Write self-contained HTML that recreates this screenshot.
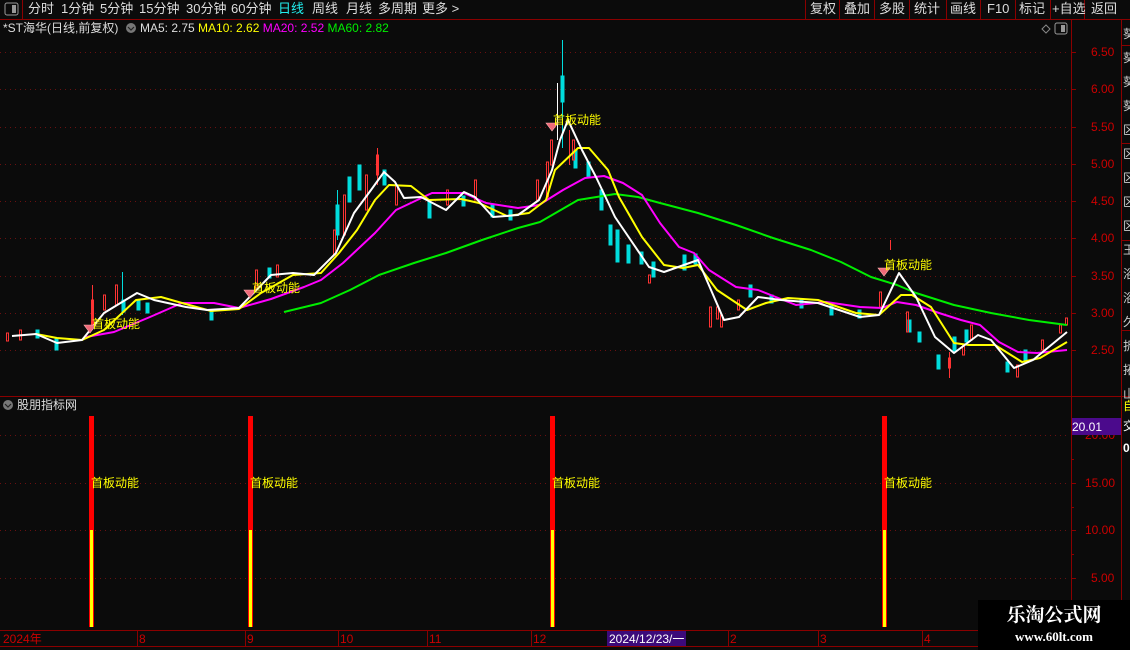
<!DOCTYPE html>
<html><head><meta charset="utf-8"><style>
*{margin:0;padding:0}
body{width:1130px;height:650px;background:#0b0b0b;overflow:hidden;position:relative;font-family:"Liberation Sans","Noto Sans CJK SC",sans-serif;color:#ddd}
.t{position:absolute;white-space:nowrap;font-size:12px;line-height:14px}
.m{font-size:13px}
</style></head><body>
<svg width="1130" height="650" style="position:absolute;left:0;top:0" xmlns="http://www.w3.org/2000/svg">
<rect x="0" y="0" width="1130" height="19" fill="#0b0b0b"/>
<line x1="0" y1="19.5" x2="1130" y2="19.5" stroke="#8b0000"/>
<line x1="22.5" y1="0" x2="22.5" y2="19" stroke="#8b0000"/>
<rect x="5" y="3" width="13" height="12" rx="2" fill="none" stroke="#999"/><rect x="12" y="5" width="4" height="8" fill="#999"/>
<g stroke="#8b0000"><line x1="805.5" y1="0" x2="805.5" y2="19"/><line x1="839.5" y1="0" x2="839.5" y2="19"/><line x1="874.5" y1="0" x2="874.5" y2="19"/><line x1="909.5" y1="0" x2="909.5" y2="19"/><line x1="946.5" y1="0" x2="946.5" y2="19"/><line x1="980.5" y1="0" x2="980.5" y2="19"/><line x1="1015.5" y1="0" x2="1015.5" y2="19"/><line x1="1050.5" y1="0" x2="1050.5" y2="19"/><line x1="1084.5" y1="0" x2="1084.5" y2="19"/></g>
<line x1="1071.5" y1="20" x2="1071.5" y2="630" stroke="#8b0000"/>
<line x1="1121.5" y1="20" x2="1121.5" y2="650" stroke="#8b0000"/>
<line x1="0" y1="396.5" x2="1130" y2="396.5" stroke="#8b0000"/>
<line x1="0" y1="630.5" x2="978" y2="630.5" stroke="#8b0000"/>
<line x1="0" y1="646.5" x2="978" y2="646.5" stroke="#8b0000"/>
<g stroke="#6a1010" stroke-dasharray="1 4">
<line x1="0" y1="52.5" x2="1068" y2="52.5"/><line x1="0" y1="89.5" x2="1068" y2="89.5"/><line x1="0" y1="127.5" x2="1068" y2="127.5"/><line x1="0" y1="164.5" x2="1068" y2="164.5"/><line x1="0" y1="201.5" x2="1068" y2="201.5"/><line x1="0" y1="238.5" x2="1068" y2="238.5"/><line x1="0" y1="276.5" x2="1068" y2="276.5"/><line x1="0" y1="313.5" x2="1068" y2="313.5"/><line x1="0" y1="350.5" x2="1068" y2="350.5"/>
<line x1="0" y1="435.5" x2="1068" y2="435.5"/><line x1="0" y1="483.5" x2="1068" y2="483.5"/><line x1="0" y1="530.5" x2="1068" y2="530.5"/><line x1="0" y1="578.5" x2="1068" y2="578.5"/>
</g>
<g stroke="#8b0000">
<line x1="1071" y1="52.5" x2="1076" y2="52.5"/><line x1="1071" y1="89.5" x2="1076" y2="89.5"/><line x1="1071" y1="127.5" x2="1076" y2="127.5"/><line x1="1071" y1="164.5" x2="1076" y2="164.5"/><line x1="1071" y1="201.5" x2="1076" y2="201.5"/><line x1="1071" y1="238.5" x2="1076" y2="238.5"/><line x1="1071" y1="276.5" x2="1076" y2="276.5"/><line x1="1071" y1="313.5" x2="1076" y2="313.5"/><line x1="1071" y1="350.5" x2="1076" y2="350.5"/>
<line x1="1071" y1="459.5" x2="1074" y2="459.5"/><line x1="1071" y1="483.5" x2="1076" y2="483.5"/><line x1="1071" y1="507.5" x2="1074" y2="507.5"/><line x1="1071" y1="530.5" x2="1076" y2="530.5"/><line x1="1071" y1="554.5" x2="1074" y2="554.5"/><line x1="1071" y1="578.5" x2="1076" y2="578.5"/>
<line x1="1121" y1="45.5" x2="1130" y2="45.5"/><line x1="1121" y1="143.5" x2="1130" y2="143.5"/><line x1="1121" y1="240.5" x2="1130" y2="240.5"/><line x1="1121" y1="330.5" x2="1130" y2="330.5"/>
<line x1="137.5" y1="630" x2="137.5" y2="646"/><line x1="245.5" y1="630" x2="245.5" y2="646"/><line x1="338.5" y1="630" x2="338.5" y2="646"/><line x1="427.5" y1="630" x2="427.5" y2="646"/><line x1="531.5" y1="630" x2="531.5" y2="646"/><line x1="728.5" y1="630" x2="728.5" y2="646"/><line x1="818.5" y1="630" x2="818.5" y2="646"/><line x1="922.5" y1="630" x2="922.5" y2="646"/>
</g>
<rect x="607" y="631" width="79" height="15" fill="#3c0a7a"/>
<g stroke-width="1">
<g fill="#0dd" stroke="#0dd">
<line x1="562.5" y1="40" x2="562.5" y2="148"/><rect x="561" y="76" width="3" height="26"/>
<rect x="36" y="330" width="3" height="8"/><rect x="55" y="338" width="3" height="12"/><rect x="137" y="300" width="3" height="10"/><rect x="122" y="300" width="3" height="12"/><line x1="122.5" y1="272" x2="122.5" y2="315"/><rect x="146" y="303" width="3" height="10"/><rect x="210" y="310" width="3" height="10"/>
<rect x="268" y="268" width="3" height="10"/><rect x="336" y="205" width="3" height="30"/><line x1="337.5" y1="190" x2="337.5" y2="240"/><rect x="348" y="177" width="3" height="25"/><rect x="358" y="165" width="3" height="25"/><rect x="383" y="170" width="3" height="15"/><rect x="428" y="200" width="3" height="18"/><rect x="462" y="196" width="3" height="10"/><rect x="491" y="205" width="3" height="12"/><rect x="509" y="210" width="3" height="10"/>
<rect x="574" y="150" width="3" height="18"/><rect x="587" y="162" width="3" height="16"/><rect x="600" y="190" width="3" height="20"/><rect x="609" y="225" width="3" height="20"/><rect x="616" y="230" width="3" height="32"/><rect x="627" y="245" width="3" height="18"/><rect x="640" y="252" width="3" height="12"/><rect x="652" y="262" width="3" height="15"/><rect x="683" y="255" width="3" height="15"/><rect x="694" y="254" width="3" height="10"/><rect x="749" y="285" width="3" height="12"/><rect x="770" y="295" width="3" height="8"/><rect x="800" y="300" width="3" height="8"/><rect x="830" y="305" width="3" height="10"/><rect x="858" y="310" width="3" height="8"/><rect x="908" y="320" width="3" height="12"/><rect x="918" y="332" width="3" height="10"/><rect x="937" y="355" width="3" height="14"/><rect x="953" y="337" width="3" height="14"/><rect x="965" y="330" width="3" height="12"/><rect x="1006" y="362" width="3" height="10"/><rect x="1024" y="350" width="3" height="10"/>
</g>
<g fill="none" stroke="#f33">
<rect x="6.5" y="333" width="2" height="8"/><rect x="19.5" y="330" width="2" height="10"/><rect x="91.5" y="300" width="2" height="25"/><line x1="92.5" y1="285" x2="92.5" y2="330"/><rect x="103.5" y="295" width="2" height="15"/><rect x="115.5" y="285" width="2" height="20"/><rect x="255.5" y="270" width="2" height="20"/><rect x="276.5" y="265" width="2" height="12"/><rect x="333.5" y="230" width="2" height="25"/><rect x="343.5" y="195" width="2" height="40"/><rect x="365.5" y="175" width="2" height="35"/><line x1="377.5" y1="148" x2="377.5" y2="185"/><rect x="376.5" y="155" width="2" height="20"/><rect x="395.5" y="185" width="2" height="20"/><rect x="446.5" y="190" width="2" height="15"/><rect x="474.5" y="180" width="2" height="20"/><rect x="536.5" y="180" width="2" height="20"/><rect x="546.5" y="162" width="2" height="35"/><rect x="550.5" y="140" width="2" height="25"/>
<line x1="557.5" y1="83" x2="557.5" y2="140" stroke="#fff"/><line x1="569.5" y1="130" x2="569.5" y2="165"/><rect x="572.5" y="140" width="2" height="20"/>
<rect x="648.5" y="275" width="2" height="8"/><rect x="709.5" y="307" width="2" height="20"/><rect x="716.5" y="307" width="2" height="12"/><rect x="720.5" y="315" width="2" height="12"/><rect x="737.5" y="300" width="2" height="10"/><line x1="890.5" y1="240" x2="890.5" y2="250"/><rect x="879.5" y="292" width="2" height="15"/><rect x="906.5" y="312" width="2" height="20"/><rect x="948.5" y="358" width="2" height="10"/><line x1="949.5" y1="352" x2="949.5" y2="378"/><rect x="962.5" y="345" width="2" height="10"/><rect x="970.5" y="325" width="2" height="15"/><rect x="1016.5" y="365" width="2" height="12"/><rect x="1041.5" y="340" width="2" height="10"/><rect x="1059.5" y="325" width="2" height="8"/><rect x="1065.5" y="318" width="2" height="7"/>
</g>
</g>
<g fill="none" stroke-width="2" stroke-linejoin="round">
<polyline stroke="#0e0" points="284,312 321,303 350,290 379,275 414,263 446,253 482,240 518,228 540,222 578,200 615,194 638,197 660,203 698,213 736,225 773,238 811,250 841,262 871,277 897,285 916,293 954,305 991,313 1029,320 1067,325"/>
<polyline stroke="#f0f" points="86,337 114,332 150,317 182,303 214,303 239,308 271,299 304,287 321,280 343,263 375,233 396,210 432,193 464,193 486,203 518,208 539,205 563,190 585,178 604,176 623,183 642,195 660,223 679,247 694,253 709,270 736,287 758,290 796,305 826,302 860,307 882,308 897,302 916,305 939,313 961,320 980,325 999,342 1018,352 1037,353 1067,350"/>
<polyline stroke="#ff0" points="36,334 57,338 82,340 104,330 136,300 161,297 182,303 211,311 239,309 261,293 293,275 321,273 339,253 357,230 375,200 389,185 411,186 429,200 461,199 479,203 507,216 529,213 546,200 555,170 578,148 589,148 608,170 619,197 642,237 664,265 683,268 698,265 717,290 747,310 766,303 788,298 818,300 856,313 879,315 901,295 912,295 931,307 954,343 969,345 995,345 1022,362 1040,358 1067,342"/>
<polyline stroke="#fff" points="12,336 36,334 57,343 82,340 104,313 137,293 154,300 186,307 207,310 239,308 271,275 293,273 314,275 336,253 354,213 371,190 384,172 395,182 404,198 421,197 446,210 464,192 475,197 493,217 518,215 539,200 552,170 560,140 568,120 582,150 596,177 615,217 649,267 664,272 698,260 724,320 739,317 758,297 781,300 818,303 860,317 879,315 899,273 916,297 935,337 954,353 978,335 991,340 1014,368 1033,360 1067,332"/>
</g>
<g fill="#f06a7a" stroke="#ffb0b0" stroke-width="0.6">
<polygon points="84,325 96,325 90,333"/><polygon points="244,290 256,290 250,298"/><polygon points="546,123 558,123 552,131"/><polygon points="878,268 890,268 884,276"/>
</g>
<g>
<rect x="89" y="416" width="5" height="114" fill="#f00"/><rect x="89" y="530" width="5" height="97" fill="#f00"/><rect x="90" y="530" width="3" height="97" fill="#ff0"/>
<rect x="248" y="416" width="5" height="114" fill="#f00"/><rect x="248" y="530" width="5" height="97" fill="#f00"/><rect x="249" y="530" width="3" height="97" fill="#ff0"/>
<rect x="550" y="416" width="5" height="114" fill="#f00"/><rect x="550" y="530" width="5" height="97" fill="#f00"/><rect x="551" y="530" width="3" height="97" fill="#ff0"/>
<rect x="882" y="416" width="5" height="114" fill="#f00"/><rect x="882" y="530" width="5" height="97" fill="#f00"/><rect x="883" y="530" width="3" height="97" fill="#ff0"/>
</g>
<circle cx="131" cy="28" r="5" fill="#777"/><polyline points="128,27 131,30 134,27" fill="none" stroke="#222" stroke-width="1.2"/>
<circle cx="8" cy="405" r="5" fill="#777"/><polyline points="5,404 8,407 11,404" fill="none" stroke="#222" stroke-width="1.2"/>
<polygon points="1042,29 1046,25 1050,29 1046,33" fill="none" stroke="#888"/>
<rect x="1055" y="23" width="12" height="11" rx="2" fill="none" stroke="#999"/><rect x="1061" y="25" width="4" height="7" fill="#999"/>
<rect x="978" y="600" width="152" height="50" fill="#000"/>
</svg>

<div class="t m" style="left:28px;top:2px">分时</div>
<div class="t m" style="left:61px;top:2px">1分钟</div>
<div class="t m" style="left:100px;top:2px">5分钟</div>
<div class="t m" style="left:139px;top:2px">15分钟</div>
<div class="t m" style="left:186px;top:2px">30分钟</div>
<div class="t m" style="left:231px;top:2px">60分钟</div>
<div class="t m" style="left:278px;top:2px;color:#2ee">日线</div>
<div class="t m" style="left:312px;top:2px">周线</div>
<div class="t m" style="left:346px;top:2px">月线</div>
<div class="t m" style="left:378px;top:2px">多周期</div>
<div class="t m" style="left:422px;top:2px">更多 &gt;</div>
<div class="t m" style="left:810px;top:2px">复权</div>
<div class="t m" style="left:844px;top:2px">叠加</div>
<div class="t m" style="left:879px;top:2px">多股</div>
<div class="t m" style="left:914px;top:2px">统计</div>
<div class="t m" style="left:950px;top:2px">画线</div>
<div class="t m" style="left:987px;top:2px">F10</div>
<div class="t m" style="left:1019px;top:2px">标记</div>
<div class="t m" style="left:1052px;top:2px">+自选</div>
<div class="t m" style="left:1091px;top:2px">返回</div>

<div class="t" style="left:3px;top:21px">*ST海华(日线,前复权)</div>
<div class="t" style="left:140px;top:21px">MA5: 2.75 <span style="color:#ff0">MA10: 2.62</span> <span style="color:#f0f">MA20: 2.52</span> <span style="color:#0e0">MA60: 2.82</span></div>

<div class="t" style="left:1091px;top:45px;color:#c00">6.50</div>
<div class="t" style="left:1091px;top:82px;color:#c00">6.00</div>
<div class="t" style="left:1091px;top:120px;color:#c00">5.50</div>
<div class="t" style="left:1091px;top:157px;color:#c00">5.00</div>
<div class="t" style="left:1091px;top:194px;color:#c00">4.50</div>
<div class="t" style="left:1091px;top:231px;color:#c00">4.00</div>
<div class="t" style="left:1091px;top:269px;color:#c00">3.50</div>
<div class="t" style="left:1091px;top:306px;color:#c00">3.00</div>
<div class="t" style="left:1091px;top:343px;color:#c00">2.50</div>
<div class="t" style="left:1085px;top:428px;color:#c00">20.00</div>
<div style="position:absolute;left:1072px;top:418px;width:49px;height:17px;background:#4b0a8c"></div>
<div class="t" style="left:1085px;top:476px;color:#c00">15.00</div>
<div class="t" style="left:1085px;top:523px;color:#c00">10.00</div>
<div class="t" style="left:1091px;top:571px;color:#c00">5.00</div>
<div class="t" style="left:1072px;top:420px;color:#fff">20.01</div>
<div class="t" style="left:1123px;top:399px;color:#ff0">自</div>
<div class="t" style="left:1123px;top:419px;color:#fff">交</div>
<div class="t" style="left:1123px;top:441px;color:#fff;font-weight:bold">0</div>
<div class="t" style="left:1123px;top:22px;color:#ccc;line-height:24px">葵<br>葵<br>葵<br>葵<br>区<br>区<br>区<br>区<br>区<br>王<br>浴<br>浴<br>久<br>折<br>拓<br>山</div>

<div class="t" style="left:92px;top:317px;color:#ff0">首板动能</div>
<div class="t" style="left:252px;top:281px;color:#ff0">首板动能</div>
<div class="t" style="left:553px;top:113px;color:#ff0">首板动能</div>
<div class="t" style="left:884px;top:258px;color:#ff0">首板动能</div>

<div class="t" style="left:17px;top:398px">股朋指标网</div>
<div class="t" style="left:91px;top:476px;color:#ff0">首板动能</div>
<div class="t" style="left:250px;top:476px;color:#ff0">首板动能</div>
<div class="t" style="left:552px;top:476px;color:#ff0">首板动能</div>
<div class="t" style="left:884px;top:476px;color:#ff0">首板动能</div>

<div class="t" style="left:3px;top:632px;color:#c00">2024年</div>
<div class="t" style="left:139px;top:632px;color:#c00">8</div>
<div class="t" style="left:247px;top:632px;color:#c00">9</div>
<div class="t" style="left:340px;top:632px;color:#c00">10</div>
<div class="t" style="left:429px;top:632px;color:#c00">11</div>
<div class="t" style="left:533px;top:632px;color:#c00">12</div>
<div class="t" style="left:609px;top:632px;color:#fff">2024/12/23/一</div>
<div class="t" style="left:730px;top:632px;color:#c00">2</div>
<div class="t" style="left:820px;top:632px;color:#c00">3</div>
<div class="t" style="left:924px;top:632px;color:#c00">4</div>

<div class="t" style="left:978px;top:605px;width:152px;text-align:center;color:#fff;font-family:'Liberation Serif','Noto Serif CJK SC',serif;font-weight:bold;font-size:19px;line-height:22px">乐淘公式网</div>
<div class="t" style="left:978px;top:630px;width:152px;text-align:center;color:#fff;font-family:'Liberation Serif',serif;font-weight:bold;font-size:13px">www.60lt.com</div>
</body></html>
